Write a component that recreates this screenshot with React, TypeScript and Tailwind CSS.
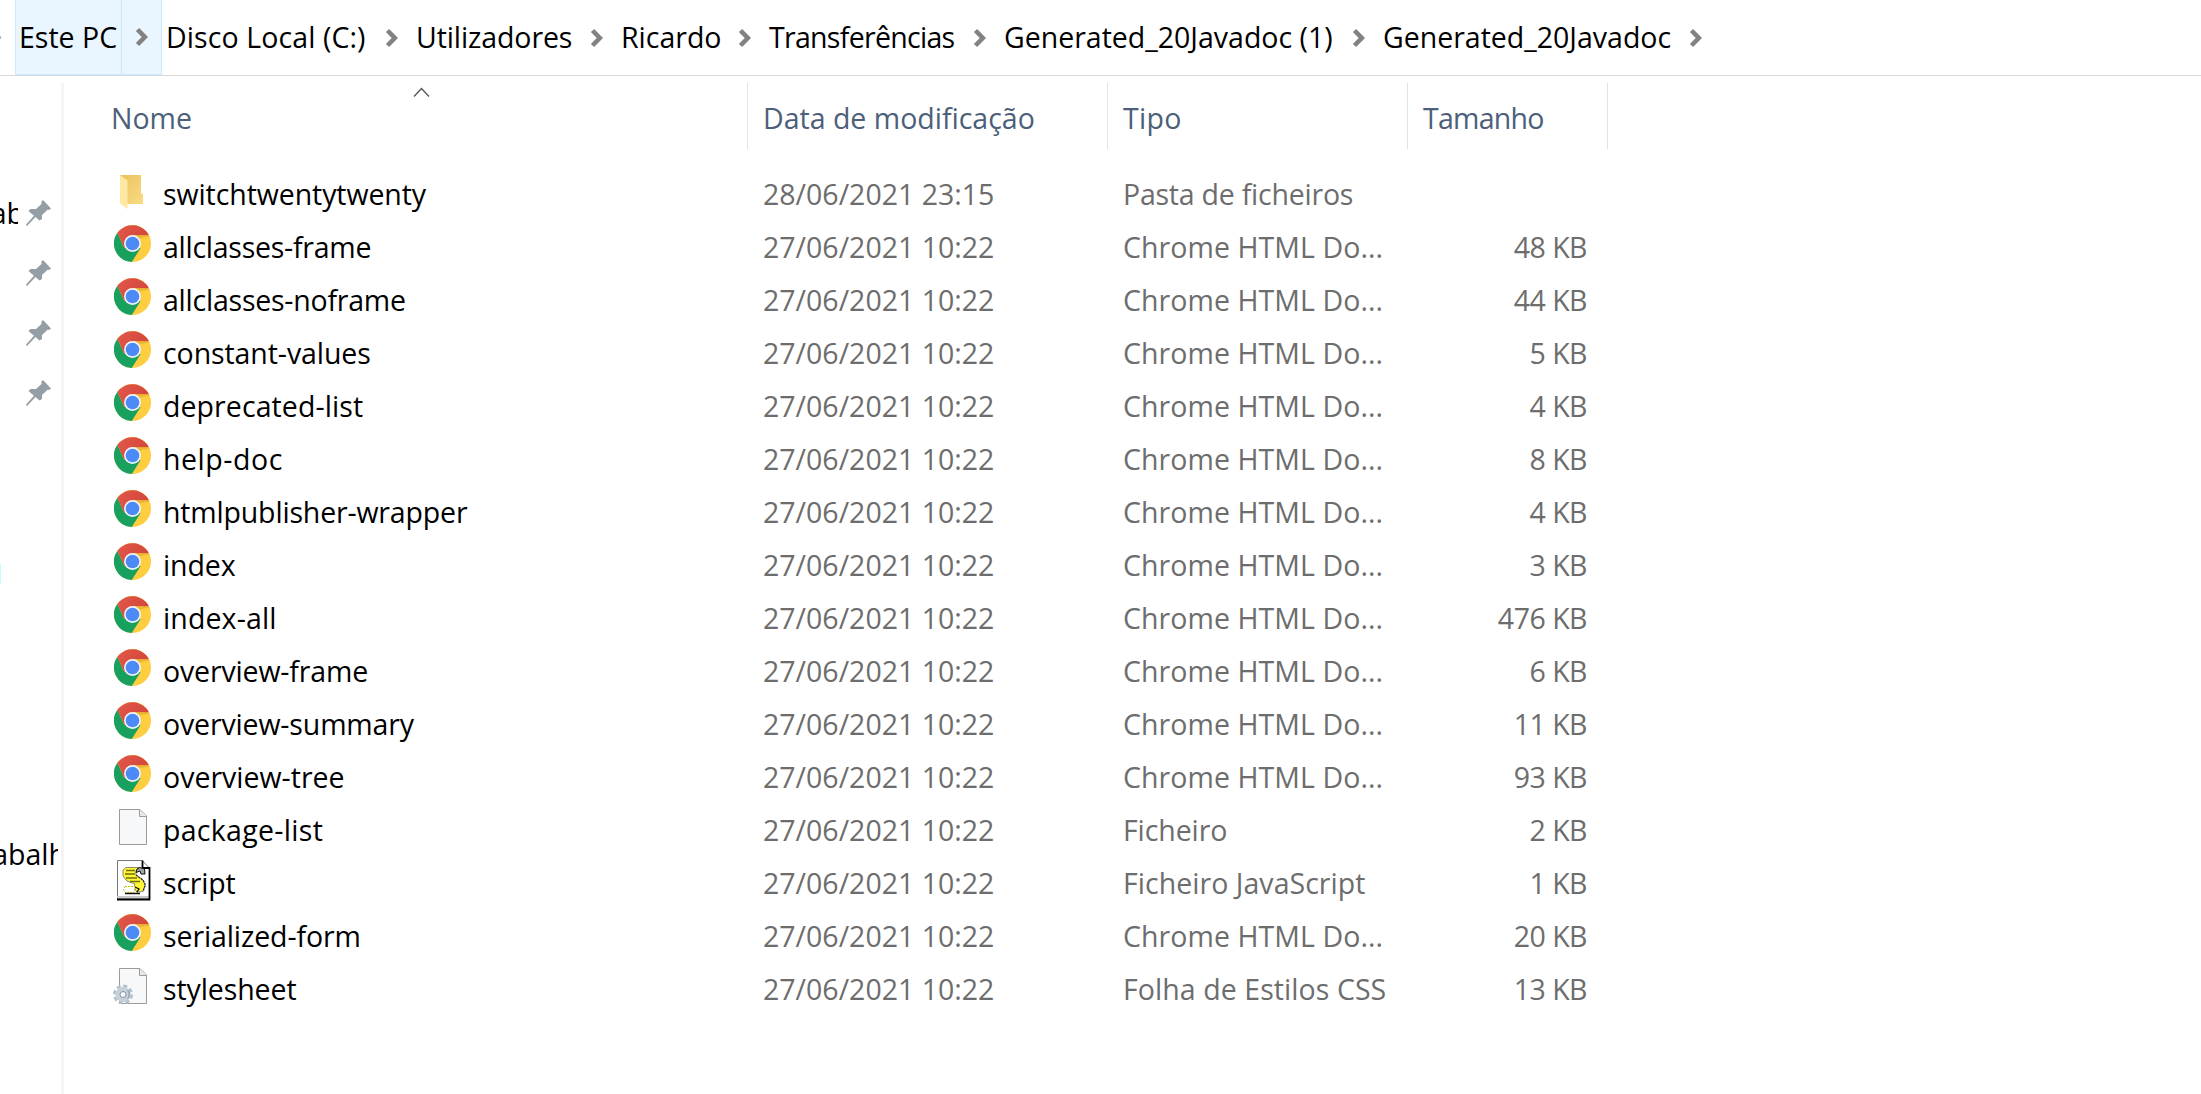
import React, { useId } from "react";

type Kind = "folder" | "chrome" | "file" | "script" | "css";
type Entry = { kind: Kind; name: string; date: string; type: string; size: string; tracking: string };

const D = "27/06/2021 10:22";
const H = "Chrome HTML Do...";

const entries: Entry[] = [
  { kind: "folder", name: "switchtwentytwenty", date: "28/06/2021 23:15", type: "Pasta de ficheiros", size: "", tracking: "tracking-[-0.08px]" },
  { kind: "chrome", name: "allclasses-frame", date: D, type: H, size: "48 KB", tracking: "tracking-[-0.26px]" },
  { kind: "chrome", name: "allclasses-noframe", date: D, type: H, size: "44 KB", tracking: "tracking-[-0.23px]" },
  { kind: "chrome", name: "constant-values", date: D, type: H, size: "5 KB", tracking: "tracking-[-0.08px]" },
  { kind: "chrome", name: "deprecated-list", date: D, type: H, size: "4 KB", tracking: "tracking-[0.08px]" },
  { kind: "chrome", name: "help-doc", date: D, type: H, size: "8 KB", tracking: "tracking-[0.55px]" },
  { kind: "chrome", name: "htmlpublisher-wrapper", date: D, type: H, size: "4 KB", tracking: "tracking-[-0.17px]" },
  { kind: "chrome", name: "index", date: D, type: H, size: "3 KB", tracking: "tracking-[-0.1px]" },
  { kind: "chrome", name: "index-all", date: D, type: H, size: "476 KB", tracking: "tracking-[0.12px]" },
  { kind: "chrome", name: "overview-frame", date: D, type: H, size: "6 KB", tracking: "tracking-[-0.15px]" },
  { kind: "chrome", name: "overview-summary", date: D, type: H, size: "11 KB", tracking: "tracking-[-0.15px]" },
  { kind: "chrome", name: "overview-tree", date: D, type: H, size: "93 KB", tracking: "tracking-[0px]" },
  { kind: "file", name: "package-list", date: D, type: "Ficheiro", size: "2 KB", tracking: "tracking-[0.3px]" },
  { kind: "script", name: "script", date: D, type: "Ficheiro JavaScript", size: "1 KB", tracking: "tracking-[-0.2px]" },
  { kind: "chrome", name: "serialized-form", date: D, type: H, size: "20 KB", tracking: "tracking-[-0.1px]" },
  { kind: "css", name: "stylesheet", date: D, type: "Folha de Estilos CSS", size: "13 KB", tracking: "tracking-[-0.1px]" },
];

const crumbs = [
  { label: "Disco Local (C:)", style: "w-[250px] tracking-[0.1px]" },
  { label: "Utilizadores", style: "w-[205px] tracking-[-0.1px]" },
  { label: "Ricardo", style: "w-[148px]" },
  { label: "Transferências", style: "w-[235px] tracking-[-0.7px]" },
  { label: "Generated_20Javadoc (1)", style: "w-[379px]" },
  { label: "Generated_20Javadoc", style: "w-[337px]" },
];

function Chevron() {
  return (
    <svg className="h-[20px] w-[14px] shrink-0" viewBox="0 0 14 20">
      <path d="M2.5 2.5 9.8 10 2.5 17.5" fill="none" stroke="#828282" strokeWidth="4.6" />
    </svg>
  );
}

function ChromeIcon() {
  const id = useId();
  return (
    <svg className="mt-[3px] ml-[2px] size-[37px]" viewBox="0 0 48 48">
      <defs>
        <linearGradient id={id} x1="0" y1="0" x2="1" y2="0.4">
          <stop offset="0" stopColor="#e2574c" />
          <stop offset="1" stopColor="#d4463a" />
        </linearGradient>
      </defs>
      <circle cx="24" cy="24" r="24" fill="#ffcd40" />
      <path d="M24 24 13.6 30 4.4 10.2A24 24 0 0 0 23 48L34.4 30Z" fill="#17a05e" />
      <path d="M4.4 10.2A24 24 0 0 1 45.2 13.3H24L13.6 30Z" fill={`url(#${id})`} />
      <path d="M24 13.3H45.2L46 15 32 17.5Z" fill="#d9a52c" opacity="0.55" />
      <circle cx="24" cy="24" r="11" fill="#f1f3f6" />
      <circle cx="24" cy="24" r="8.9" fill="#4c8bf5" />
    </svg>
  );
}

function FolderIcon() {
  const id = useId();
  return (
    <svg className="mt-[5px] ml-[7px] h-[36px] w-[26px]" viewBox="0 0 26 36">
      <defs>
        <linearGradient id={id} x1="0" y1="0" x2="1" y2="1">
          <stop offset="0" stopColor="#e8c25c" />
          <stop offset="1" stopColor="#fbdc84" />
        </linearGradient>
      </defs>
      <path d="M1 1H22V19L24 20.500V30H8Z" fill={`url(#${id})`} />
      <path d="M1 1 8.500 6.500V35L1 29.500Z" fill="#ffe8a3" />
    </svg>
  );
}

function Page() {
  return (
    <>
      <path d="M7.500 4.500H28L34.500 11V39.500H7.500Z" fill="#f7f8f9" stroke="#9b9b9b" />
      <path d="M27.500 4.500V11.500H34.500" fill="#e9e9e9" stroke="#9b9b9b" />
    </>
  );
}

function FileIcon() {
  return (
    <svg className="h-[46px] w-[44px]" viewBox="0 0 44 46">
      <Page />
    </svg>
  );
}

function CssIcon() {
  return (
    <svg className="h-[46px] w-[44px]" viewBox="0 0 44 46">
      <Page />
      <g transform="translate(11 30.5)">
        <circle r="8" fill="none" stroke="#b4c2cc" strokeWidth="4" strokeDasharray="3.800 2.483" />
        <circle r="5.200" fill="none" stroke="#c6d1d9" strokeWidth="4.600" />
        <path d="M4.500 -4.500A6.400 6.400 0 0 1 4.500 4.500" fill="none" stroke="#93a5b2" strokeWidth="1.400" />
        <circle r="3" fill="#fafbfc" stroke="#7c8f9d" />
      </g>
    </svg>
  );
}

function ScriptIcon() {
  return (
    <svg className="h-[46px] w-[44px]" viewBox="0 0 44 46">
      <path d="M5.500 2.500H30L37.500 10V41H5.500Z" fill="#fff" stroke="#777" />
      <path d="M5 39H37" stroke="#c8c8c8" strokeWidth="2" />
      <path d="M30.500 2.500V10H38M37.500 9V41.500H5" fill="none" stroke="#000" strokeWidth="1.800" />
      <path d="M14 9.500H27L24 13V17L31 22 33 27 31 33 25 34.500 22 29 23 26 15 23 11 18V12Z" fill="#fff733" stroke="#8a8a70" />
      <path d="M14 12.500H23M13 16H23M14 20H25M18 23.500H28" stroke="#6f6f12" strokeWidth="1.700" />
      <path d="M24 14.500 25 11 28 9.500 32.500 11 33 16H29L28 13Z" fill="#a4a4a4" stroke="#111" />
      <path d="M24 17 31 22 33.500 27 31 33.500" fill="none" stroke="#222" strokeWidth="1.200" strokeDasharray="2 1" />
      <path d="M13 28.500H23L22 34.500H13L11.500 31.500Z" fill="#fff" stroke="#c9c400" strokeDasharray="2 1" />
      <path d="M13 35.500H28M23 29 27 31 25 34" fill="none" stroke="#111" strokeWidth="1.300" />
    </svg>
  );
}

function Icon({ kind }: { kind: Kind }) {
  if (kind === "folder") return <FolderIcon />;
  if (kind === "chrome") return <ChromeIcon />;
  if (kind === "file") return <FileIcon />;
  if (kind === "script") return <ScriptIcon />;
  return <CssIcon />;
}

function Pin() {
  return (
    <svg className="block h-[26px] w-[25px]" viewBox="0 0 25 26">
      <path
        d="M17 0 25 8.500 23 10 21.500 9.800 16 15V19L13.500 20.500 9.500 17 1.500 25.500 0 26 .5 24 8 15.800 2.500 11 4.500 9H10L15.500 4V1.500Z"
        fill="#949ea5"
      />
    </svg>
  );
}

const typeTracking: Record<string, string> = {
  "Pasta de ficheiros": "tracking-[-0.23px]",
  [H]: "tracking-[0.07px]",
  Ficheiro: "tracking-[-0.1px]",
  "Ficheiro JavaScript": "tracking-[0.04px]",
  "Folha de Estilos CSS": "tracking-[0.07px]",
};

export default function App() {
  return (
    <div className="flex h-[1094px] w-[2201px] flex-col overflow-hidden bg-white font-['Open_Sans',sans-serif] text-[28.500px] leading-[53px] whitespace-nowrap text-black">
      <header className="flex h-[76px] shrink-0 border-b border-[#d9d9d9]">
        <div className="flex w-[15px] items-center">
          <span className="h-[3px] w-px bg-[#b5b5b5]" />
        </div>
        <div className="flex w-[107px] items-center border border-t-0 border-[#cce8ff] bg-[#e9f5ff] pl-[3px]">Este PC</div>
        <div className="flex w-[40px] items-center border-r border-b border-[#cce8ff] bg-[#e9f5ff] pl-[13px]">
          <Chevron />
        </div>
        <div className="flex items-center pl-[4px]">
          {crumbs.map((c) => (
            <div key={c.label} className={`flex shrink-0 items-center justify-between ${c.style}`}>
              <span>{c.label}</span>
              <span className="mr-[17px] flex">
                <Chevron />
              </span>
            </div>
          ))}
        </div>
      </header>

      <div className="flex min-h-0 grow pt-[7px]">
        <nav className="flex w-[61px] shrink-0 flex-col overflow-hidden pt-[100px]">
          <div className="flex h-[60px] items-center">
            <span className="flex w-[18px] shrink-0 justify-end overflow-hidden">
              <span className="-mr-[6px]">ab</span>
            </span>
            <span className="ml-[8px]">
              <Pin />
            </span>
          </div>
          {[0, 1, 2].map((i) => (
            <div key={i} className="flex h-[60px] items-center pl-[26px]">
              <Pin />
            </div>
          ))}
          <div className="mt-[141px] h-[20px] w-px bg-[#c9fbff]" />
          <div className="mt-[244px] flex w-[58px] justify-end overflow-hidden">
            <span className="-mr-[8px]">abalh</span>
          </div>
        </nav>
        <div className="w-[3px] shrink-0 bg-[#f5f5f5]" />

        <main className="flex flex-col">
          <div className="flex h-[66px] text-[#4c607a]">
            <div className="relative w-[684px] border-r border-[#e2e2e2] pt-[9px] pl-[47px]">
              Nome
              <svg className="absolute top-[4px] left-[349px] h-[11px] w-[17px]" viewBox="0 0 17 11">
                <path d="M1 9.500 8.500 1.500 16 9.500" fill="none" stroke="#555" strokeWidth="1.300" />
              </svg>
            </div>
            <div className="w-[360px] border-r border-[#e2e2e2] pt-[9px] pl-[15px]">Data de modificação</div>
            <div className="w-[300px] border-r border-[#e2e2e2] pt-[9px] pl-[15px] tracking-[0.3px]">Tipo</div>
            <div className="w-[200px] border-r border-[#e2e2e2] pt-[9px] pl-[15px] tracking-[-0.75px]">Tamanho</div>
          </div>
          <div className="flex flex-col pt-[19px]">
            {entries.map((e) => (
              <div key={e.name} className="flex h-[53px] text-[#6d6d6d]">
                <div className="flex w-[699px] pl-[48px] text-black">
                  <span className="w-[51px] shrink-0 pt-px">
                    <Icon kind={e.kind} />
                  </span>
                  <span className={e.tracking}>{e.name}</span>
                </div>
                <div className="w-[360px]">{e.date}</div>
                <div className={`w-[300px] ${typeTracking[e.type]}`}>{e.type}</div>
                <div className="w-[164px] text-right tracking-[-0.5px]">{e.size}</div>
              </div>
            ))}
          </div>
        </main>
      </div>
    </div>
  );
}
